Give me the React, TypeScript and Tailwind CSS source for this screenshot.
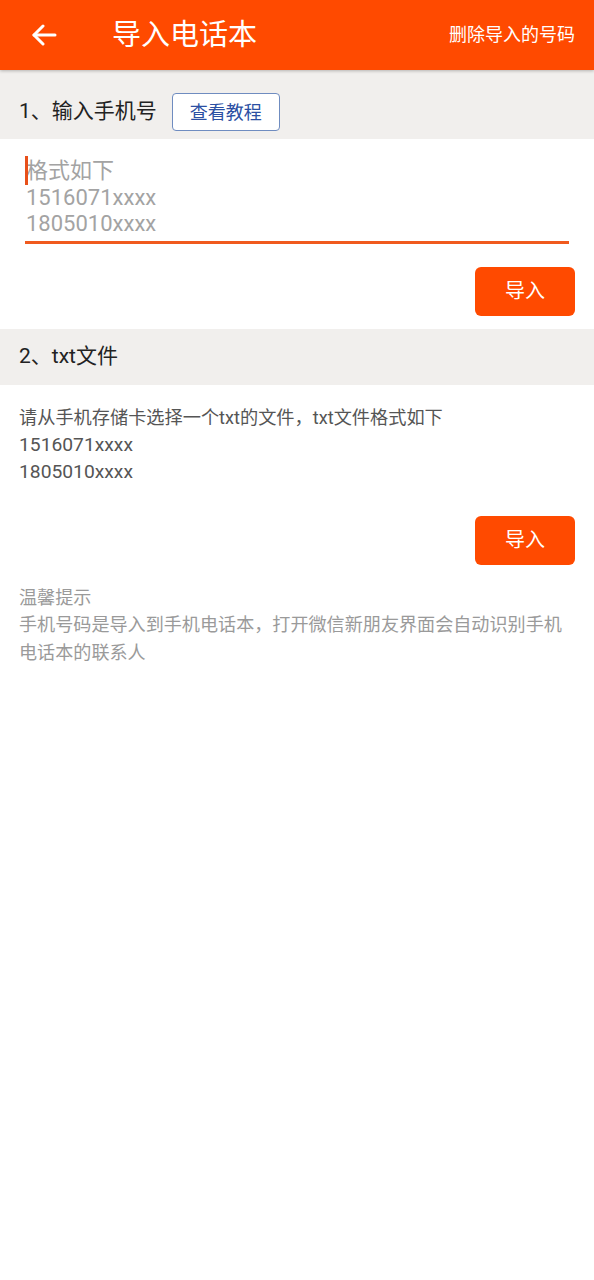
import React from "react";

const font = { fontFamily: "Roboto, 'Noto Sans CJK SC', sans-serif" };

export default function App() {
  return (
    <div className="w-[594px] min-h-[1280px] bg-white" style={font}>
      {/* Header */}
      <div className="relative z-10 h-[70px] bg-[#ff4a00] flex items-center shadow-[0_1px_3px_rgba(0,0,0,0.25)]">
        <div className="w-[112px] pl-[31px] flex items-center">
          <svg width="26" height="22" viewBox="0 0 26 22" fill="none">
            <path d="M3 11 H24" stroke="white" strokeWidth="3" strokeLinecap="round" />
            <path d="M12 2 L3 11 L12 20" stroke="white" strokeWidth="3" strokeLinecap="round" strokeLinejoin="round" />
          </svg>
        </div>
        <div className="text-white text-[29px] leading-none">导入电话本</div>
        <div className="ml-auto pr-[19px] text-white text-[18px] leading-none">删除导入的号码</div>
      </div>

      {/* Section 1 header */}
      <div className="h-[69px] bg-[#f1efed] flex items-start pt-[23px] pl-[19px]">
        <div className="flex items-center">
          <span className="text-[21px] text-[#222]">1、输入手机号</span>
          <div className="ml-[15px] h-[38px] w-[108px] rounded-[4px] border border-[#6f8cc0] bg-white flex items-center justify-center text-[18px] text-[#2b4fa3]">
            查看教程
          </div>
        </div>
      </div>

      {/* Input area */}
      <div className="px-[25px] pt-[19px]">
        <div className="relative text-[22px] leading-[26.5px] text-[#a3a3a3] pl-[1px] pb-[3px] border-b-[3px] border-[#f05a1e]">
          <span className="absolute left-0 top-[-2px] w-[3px] h-[29px] bg-[#e8501a]" />
          <div>格式如下</div>
          <div>1516071xxxx</div>
          <div>1805010xxxx</div>
        </div>
      </div>
      <div className="flex justify-end pr-[19px] pt-[23px] pb-[13px]">
        <div className="w-[100px] h-[49px] rounded-[6px] bg-[#ff4a00] text-white text-[20px] flex items-center justify-center">
          导入
        </div>
      </div>

      {/* Section 2 header */}
      <div className="h-[56px] bg-[#f1efed] flex items-center pl-[19px]">
        <span className="text-[21px] text-[#222]">2、txt文件</span>
      </div>

      {/* Body */}
      <div className="px-[19px] pt-[19px] text-[18.2px] leading-[27px] text-[#555]">
        <div>请从手机存储卡选择一个txt的文件，txt文件格式如下</div>
        <div className="text-[19.25px]">1516071xxxx</div>
        <div className="text-[19.25px]">1805010xxxx</div>
      </div>
      <div className="flex justify-end pr-[19px] pt-[31px]">
        <div className="w-[100px] h-[49px] rounded-[6px] bg-[#ff4a00] text-white text-[20px] flex items-center justify-center">
          导入
        </div>
      </div>

      {/* Tip */}
      <div className="px-[19px] pt-[19px] text-[18.1px] leading-[27.5px] text-[#9a9a9a]">
        <div>温馨提示</div>
        <div>手机号码是导入到手机电话本，打开微信新朋友界面会自动识别手机电话本的联系人</div>
      </div>
    </div>
  );
}
